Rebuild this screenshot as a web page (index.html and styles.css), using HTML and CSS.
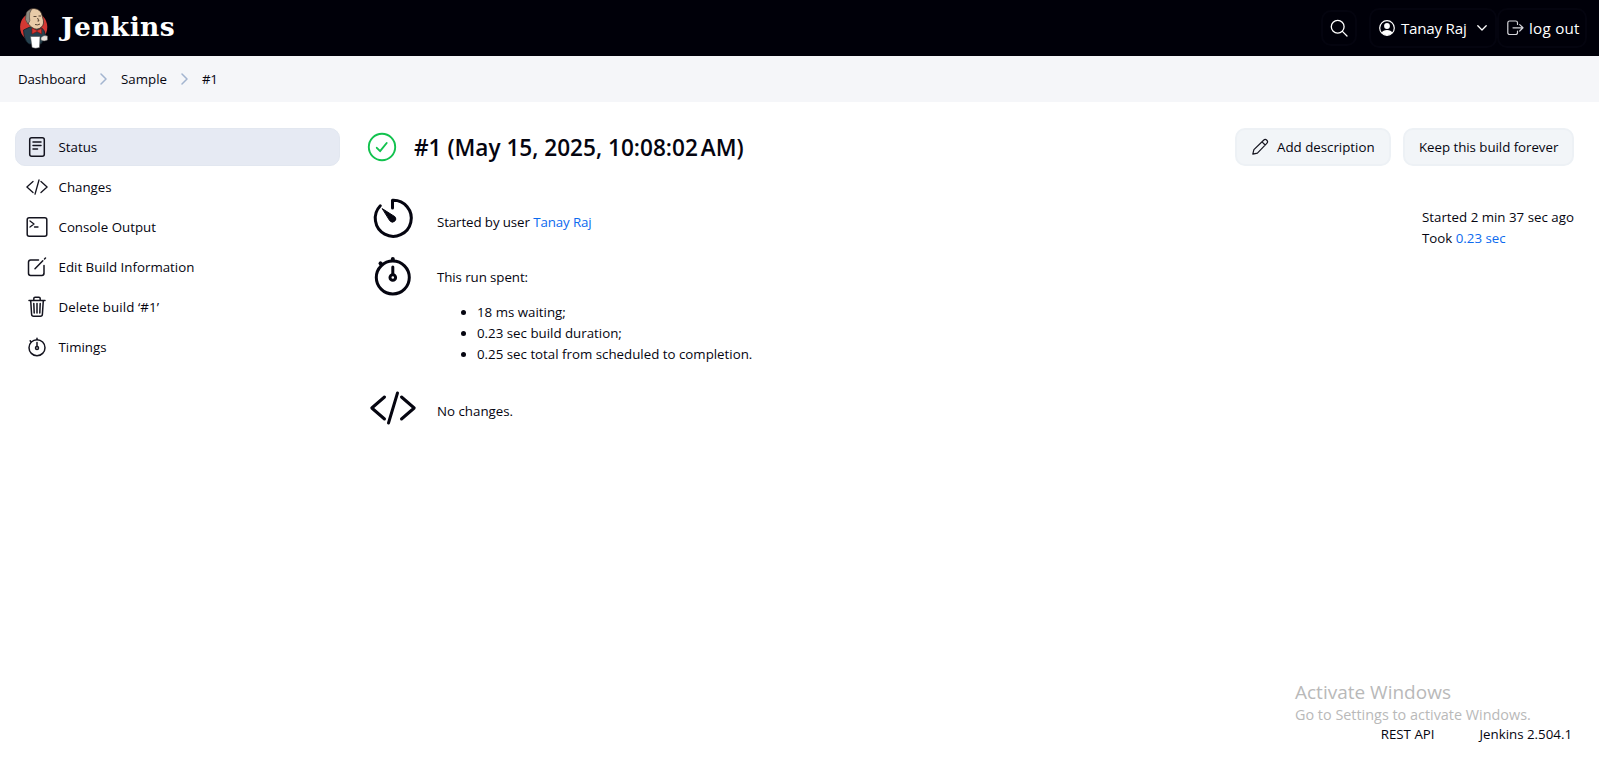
FILE: index.html
```html
<!DOCTYPE html>
<html lang="en">
<head>
<meta charset="utf-8">
<title>Sample #1 - Jenkins</title>
<link rel="stylesheet" href="styles.css">
</head>
<body>
<header class="header">
  <a class="brand">
    <svg class="mascot" viewBox="0 0 30 42">
      <ellipse cx="14.700" cy="20" rx="13.600" ry="14.500" fill="#d33833"/>
      <path d="M4.500 23 L11 20 L21 20 Q26 22 26.500 30 L22 37 L10 37 Q5 34 4.500 23Z" fill="#26414f" stroke="#111d26" stroke-width=".8"/>
      <path d="M7 11 Q7 1.500 15 1.500 Q22.500 2 23.500 10 Q26 17 22.500 20 Q18 24 13 20.500 Q9 18 8.500 14Z" fill="#e8cba8" stroke="#3a2d26" stroke-width=".8"/>
      <path d="M7 8 Q5 13 9 17 Q12 14 10.500 10 Q10 6 12.500 2.500 Q7 3 7 8Z" fill="#8f8a80" stroke="#3a2d26" stroke-width=".5"/>
      <path d="M14.500 9.500h3M19.500 9h2.500M18.500 11l1.500 3h-1.500M16 17.500q3 1 5-.5" fill="none" stroke="#493728" stroke-width=".9"/>
      <path d="M13 21l5 2.500 4.500-2v5.500l-4.500-2.500-5 2.500z" fill="#d33833" stroke="#81110e" stroke-width=".6"/>
      <path d="M11.500 29.500h9.500l-.5 11q-4 1.500-7.500 0z" fill="#fff" stroke="#444" stroke-width=".5"/>
      <path d="M22 30.500q3-3 6.500-1.500v4q-3.500 2-6.500 0z" fill="#e7e1dc" stroke="#555" stroke-width=".5"/>
    </svg>
    <span class="brand-name">Jenkins</span>
  </a>
  <div class="header-actions">
    <span class="hbtn hbtn-search">
      <svg width="18" height="18" viewBox="0 0 18 18" fill="none" stroke="#fff" stroke-width="1.300" stroke-linecap="round"><circle cx="7.700" cy="7.700" r="6.400"/><path d="M12.400 12.400 17 17"/></svg>
    </span>
    <span class="hbtn hbtn-user">
      <svg width="16" height="16" viewBox="0 0 16 16"><circle cx="8" cy="8" r="7.300" fill="none" stroke="#fff" stroke-width="1.200"/><circle cx="8" cy="6" r="2.900" fill="#fff"/><path d="M2.700 12.500Q4 10 8 10t5.300 2.500Q11.500 15 8 15.200 4.500 15 2.700 12.500Z" fill="#fff"/></svg>
      <span class="user-name">Tanay Raj</span>
      <svg width="10" height="6" viewBox="0 0 10 6" fill="none" stroke="#fff" stroke-width="1.300" stroke-linecap="round" stroke-linejoin="round"><path d="M.8.8 5 5 9.200.8"/></svg>
    </span>
    <span class="hbtn hbtn-out">
      <svg width="17" height="16" viewBox="0 0 17 16" fill="none" stroke="#d6d6dc" stroke-width="1.200" stroke-linecap="round" stroke-linejoin="round"><path d="M10.500 4.500V2.700A1.800 1.800 0 0 0 8.700 1H2.600A1.800 1.800 0 0 0 .8 2.700v10A1.800 1.800 0 0 0 2.600 14.500h6.100a1.800 1.800 0 0 0 1.800-1.800V11M6 7.800h9.800M12.700 4.600l3.300 3.200-3.300 3.200"/></svg>
      <span class="out-label">log out</span>
    </span>
  </div>
</header>

<nav class="crumbs">
  <span class="crumb c1">Dashboard</span>
  <svg width="7" height="12" viewBox="0 0 7 12"><path d="M1 1l5 5-5 5"/></svg>
  <span class="crumb c2">Sample</span>
  <svg width="7" height="12" viewBox="0 0 7 12"><path d="M1 1l5 5-5 5"/></svg>
  <span class="crumb c3">#1</span>
</nav>

<div class="page">
  <aside class="side">
    <a class="task active">
      <svg viewBox="0 0 22 22"><rect x="3.700" y="1.700" width="14.600" height="18.600" rx="2"/><path d="M7 6h8M7 9.500h8M7 13h4.500"/></svg>
      <span>Status</span></a>
    <a class="task">
      <svg class="thin" viewBox="0 0 22 22"><path d="M7 5.500.9 11 7 16.500M15 5.500l6.100 5.500-6.100 5.500M13 4 9 18.200"/></svg>
      <span>Changes</span></a>
    <a class="task">
      <svg viewBox="0 0 22 22"><rect x="1.200" y="1.800" width="19.600" height="18.400" rx="2"/><path class="thin" d="M4 5l4 3-4 3M8.500 11h3.500"/></svg>
      <span>Console Output</span></a>
    <a class="task">
      <svg viewBox="0 0 22 22"><path d="M12.500 4H4.600A2.200 2.200 0 0 0 2.500 6.100v11.300a2.200 2.200 0 0 0 2.100 2.100h11.300a2.200 2.200 0 0 0 2.100-2.100V9.500M9 12.800l7.800-8M18.500 3l1-1"/></svg>
      <span>Edit Build Information</span></a>
    <a class="task">
      <svg viewBox="0 0 22 22"><path d="M4.700 4.500l.9 13.800a2 2 0 0 0 2 1.900h6.800a2 2 0 0 0 2-1.900l.9-13.800M3 4.500h16M7.800 4.500V2.600A1.300 1.300 0 0 1 9.100 1.300h3.800a1.300 1.300 0 0 1 1.300 1.300v1.900M11 7.500v9.500M7.800 7.500l.4 9.500M14.200 7.500l-.4 9.500"/></svg>
      <span class="delete-label">Delete build ‘#1’</span></a>
    <a class="task">
      <svg viewBox="0 0 22 22"><circle cx="11" cy="11.700" r="8"/><circle cx="11" cy="12" r="1.500"/><path d="M11 10.500V6.500M11 3.500V2.300M5 5.700l-.8-.8"/></svg>
      <span>Timings</span></a>
  </aside>

  <main class="main">
    <div class="app-bar">
      <svg class="ok" viewBox="0 0 30 30"><circle cx="15" cy="15" r="13.200"/><path d="M9.800 15.800l3.300 3.400 6.600-8.200"/></svg>
      <h1>#1 (May 15, 2025, 10:08:02<span class="narrow-gap"> </span>AM)</h1>
      <div class="controls">
        <button class="btn btn-add"><svg width="18" height="18" viewBox="0 0 18 18" fill="none" stroke="#14141f" stroke-width="1.200" stroke-linejoin="round"><path d="M1.800 16.200l1.100-4.600L12.600 2.200a2.200 2.200 0 0 1 3.200 3.200L6.400 15.100zM11 3.800l3.200 3.200"/></svg><span>Add description</span></button>
        <button class="btn btn-keep"><span>Keep this build forever</span></button>
      </div>
    </div>
    <div class="body">
      <div class="summary">
        <section class="row row-cause">
          <svg viewBox="0 0 48 48"><path d="M23.500 14V6.300A18 18 0 1 1 11.300 11.800"/><path class="fill" d="M13.500 14.800 25.900 22.700A3 3 0 1 1 21 27Z"/></svg>
          <p>Started by user <a class="link">Tanay Raj</a></p>
        </section>
        <section class="row row-time">
          <svg viewBox="0 0 48 48"><circle cx="23.800" cy="27.500" r="16.500"/><circle cx="23.800" cy="27.500" r="2.800"/><path d="M23.800 24.500V17"/><path class="knob" d="M23.800 10V9M12 13.800l-.5-.5"/></svg>
          <div>
            <p>This run spent:</p>
            <ul>
              <li>18 ms waiting;</li>
              <li>0.23 sec build duration;</li>
              <li>0.25 sec total from scheduled to completion.</li>
            </ul>
          </div>
        </section>
        <section class="row row-changes">
          <svg viewBox="0 0 48 48"><path d="M15.500 13 2.800 24 15.500 35M32.500 13l12.700 11-12.700 11M28.500 9l-9 30"/></svg>
          <p>No changes.</p>
        </section>
      </div>
      <div class="when">
        <div>Started 2 min 37 sec ago</div>
        <div>Took <a class="link">0.23 sec</a></div>
      </div>
    </div>
  </main>
</div>

<footer class="footer"><span>REST API</span><span>Jenkins 2.504.1</span></footer>
<div class="watermark"><div class="wm-title">Activate Windows</div><div class="wm-text">Go to Settings to activate Windows.</div></div>
</body>
</html>
```
FILE: styles.css
```css
* { box-sizing: border-box; }
html, body { height: 100%; }
body {
  margin: 0;
  background: #fff;
  color: #050510;
  font: 13.3px/21px "Open Sans", "Noto Sans", sans-serif;
  display: flex;
  flex-direction: column;
  overflow: hidden;
  white-space: nowrap;
}
p, h1, ul { margin: 0; }
.link { color: #0b6aef; }

.header {
  height: 56px;
  flex: none;
  background: #000009;
  color: #fff;
  display: flex;
  justify-content: space-between;
  padding: 0 12px 0 19px;
}
.brand { display: flex; align-items: center; }
.mascot { width: 30px; height: 42px; margin-bottom: 1px; }
.brand-name {
  font: bold 26.5px/30px "DejaVu Serif", serif;
  letter-spacing: 0.4px;
  margin: -3px 0 0 12px;
}
.header-actions { display: flex; align-items: center; }
.hbtn {
  display: flex;
  align-items: center;
  height: 40px;
  border: 2px solid #04040f;
  border-radius: 10px;
  font-size: 15.2px;
}
.hbtn-search { width: 36px; height: 36px; justify-content: center; margin-right: 12px; }
.hbtn-user { width: 128px; padding-left: 8px; }
.user-name { width: 65px; margin: 0 11px 0 6px; letter-spacing: -0.25px; }
.hbtn-out { width: 90px; padding-left: 8px; }
.out-label { margin-left: 5px; letter-spacing: 0.25px; }

.crumbs {
  height: 46px;
  flex: none;
  background: #f5f6f9;
  display: flex;
  align-items: center;
  padding: 0 0 0 18px;
}
.crumbs svg { fill: none; stroke: #a3b5d0; stroke-width: 1.5; stroke-linecap: round; stroke-linejoin: round; }
.c1 { width: 82px; letter-spacing: -0.1px; }
.c2 { width: 46px; margin-left: 14px; }
.c2 + svg { margin-left: 14px; }
.c3 { margin-left: 14px; letter-spacing: -0.4px; }

.page { display: flex; flex: 1; padding: 26px 25px 0 15px; }
.side { width: 325px; flex: none; display: flex; flex-direction: column; gap: 2px; }
.task { height: 38px; display: flex; align-items: center; padding-left: 11px; border-radius: 10px; }
.task svg {
  width: 22px; height: 22px; margin-right: 10.5px;
  fill: none; stroke: #14141f; stroke-width: 1.5; stroke-linecap: round; stroke-linejoin: round;
}
.task .thin { stroke-width: 1.3; }
.delete-label { letter-spacing: 0.1px; }
.active { background: #e6eaf3; border: 1px solid #e2e7f0; padding-left: 10px; }

.main { flex: 1; padding-left: 27px; }
.app-bar { height: 38px; display: flex; align-items: center; }
.ok { width: 30px; height: 30px; fill: none; stroke: #12c24e; stroke-width: 1.9; stroke-linecap: round; stroke-linejoin: round; }
h1 { font-size: 22.6px; line-height: 30px; font-weight: 600; margin: 2px 0 0 17px; }
.narrow-gap { letter-spacing: -3px; }
.controls { margin-left: auto; display: flex; gap: 12px; }
.btn {
  height: 38px;
  display: flex;
  align-items: center;
  padding: 0 14px;
  background: #f2f5f8;
  border: 2px solid #edf1f5;
  border-radius: 10px;
  color: inherit;
  font: inherit;
}
.btn-add { width: 156px; }
.btn-add svg { margin: 0 8px 0 0; }
.btn-keep { width: 171px; letter-spacing: -0.04px; }

.body { display: flex; justify-content: space-between; padding-top: 28px; }
.summary { display: flex; flex-direction: column; padding-left: 2px; }
.row { display: flex; }
.row > svg {
  width: 48px; height: 48px; flex: none; margin-right: 20px;
  fill: none; stroke: #050510; stroke-width: 3; stroke-linecap: round; stroke-linejoin: round;
}
.row .fill { fill: #050510; stroke: #050510; stroke-width: 1; }
.row .knob { stroke-width: 4; }
.row-cause { height: 56px; }
.row-cause p { margin-top: 18px; letter-spacing: -0.1px; }
.row-time { height: 134px; }
.row-time p { margin-top: 17px; letter-spacing: -0.08px; }
.row-changes p { margin-top: 17px; }
ul { padding-left: 40px; margin-top: 14px; }
.when { margin-top: 13px; width: 152px; }

.footer { position: absolute; right: 27px; bottom: 18px; display: flex; gap: 45px; }
.watermark { position: absolute; left: 1295px; top: 679px; color: #b9b9b9; }
.wm-title { font-size: 19px; line-height: 26px; }
.wm-text { font-size: 14.4px; line-height: 19px; }
```
